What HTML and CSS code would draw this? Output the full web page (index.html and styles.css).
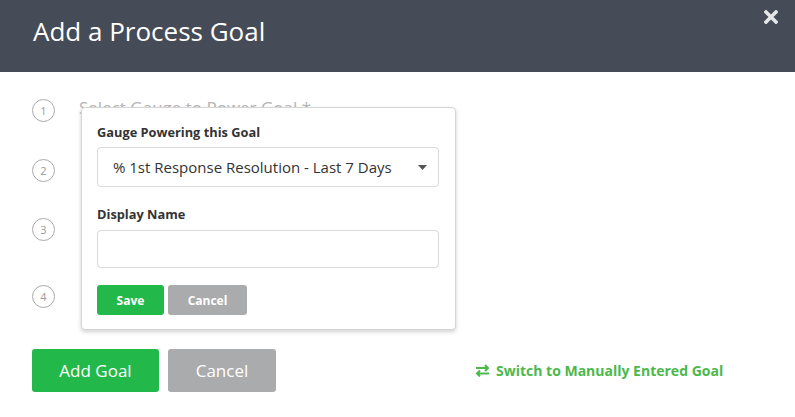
FILE: index.html
```html
<!DOCTYPE html>
<html>
<head>
<meta charset="utf-8">
<link rel="stylesheet" href="styles.css">
</head>
<body>
<div class="modal">
  <header class="modal-header">
    <h1 class="title">Add a Process Goal</h1>
    <button class="close" aria-label="Close">
      <svg width="14" height="14" viewBox="0 0 14 14"><path d="M2 2 L12 12 M12 2 L2 12" stroke="#e6e7e9" stroke-width="3.6" stroke-linecap="square"/></svg>
    </button>
  </header>
  <main class="modal-body">
    <ol class="steps">
      <li class="step s1"><span class="num">1</span><span class="label">Select Gauge to Power Goal *</span></li>
      <li class="step s2"><span class="num">2</span></li>
      <li class="step s3"><span class="num">3</span></li>
      <li class="step s4"><span class="num">4</span></li>
    </ol>
    <div class="popover">
      <label class="field-label">Gauge Powering this Goal</label>
      <div class="select">
        <span>% 1st Response Resolution - Last 7 Days</span>
        <svg width="9" height="5" viewBox="0 0 9 5"><path d="M0 0 H9 L4.5 5 Z" fill="#555"/></svg>
      </div>
      <label class="field-label dn">Display Name</label>
      <div class="input"></div>
      <div class="pop-actions">
        <button class="btn btn-green small">Save</button>
        <button class="btn btn-gray small">Cancel</button>
      </div>
    </div>
    <div class="actions">
      <button class="btn btn-green big">Add Goal</button>
      <button class="btn btn-gray big">Cancel</button>
      <a class="switch" href="#">
        <svg width="15" height="13" viewBox="0 0 15 13"><path d="M1 4 H13 M10 1 L13 4 L10 7" fill="none" stroke="#4cb84c" stroke-width="2"/><path d="M14 9.5 H2 M5 6.5 L2 9.5 L5 12.5" fill="none" stroke="#4cb84c" stroke-width="2"/></svg>
        Switch to Manually Entered Goal
      </a>
    </div>
  </main>
</div>
</body>
</html>
```
FILE: styles.css
```css
* { box-sizing: border-box; }
body {
  margin: 0;
  background: #fff;
  font-family: "Open Sans", "Liberation Sans", sans-serif;
  color: #333;
}
.modal { width: 795px; height: 417px; overflow: hidden; }
.modal-header {
  height: 72px;
  background: #454c57;
  display: flex;
  align-items: flex-start;
  justify-content: space-between;
  padding: 0 17px 0 33px;
}
.title {
  margin: 14px 0 0;
  font-size: 26px;
  line-height: 35px;
  font-weight: 400;
  color: #fff;
}
.close {
  margin-top: 10px;
  background: none;
  border: 0;
  padding: 0;
  width: 14px;
  height: 14px;
  display: flex;
}
.modal-body { position: relative; padding: 0 0 0 32px; }
.steps {
  list-style: none;
  margin: 0;
  padding: 27px 0 0;
  display: flex;
  flex-direction: column;
}
.step { display: flex; align-items: center; height: 22px; }
.s2 { margin-top: 38px; }
.s3 { margin-top: 37px; }
.s4 { margin-top: 45px; }
.num {
  width: 23px;
  height: 23px;
  border: 1px solid #a9a9a9;
  border-radius: 50%;
  display: flex;
  align-items: center;
  justify-content: center;
  font-size: 11px;
  color: #999;
  flex: none;
}
.label {
  margin-left: 24px;
  font-size: 17px;
  color: #b5b5b5;
  position: relative;
  top: -3px;
}
.popover {
  position: absolute;
  left: 81px;
  top: 35px;
  width: 375px;
  height: 223px;
  background: #fff;
  border: 1px solid #d5d5d5;
  border-radius: 4px;
  box-shadow: 0 2px 4px rgba(0,0,0,0.18);
  padding: 16px 16px 0 15px;
  display: flex;
  flex-direction: column;
}
.field-label {
  font-size: 12.8px;
  font-weight: 700;
  color: #333;
  line-height: 16px;
}
.select {
  margin-top: 7px;
  height: 40px;
  border: 1px solid #d9d9d9;
  border-radius: 4px;
  display: flex;
  align-items: center;
  justify-content: space-between;
  padding: 0 11px 0 15px;
  font-size: 15px;
  color: #333;
}
.dn { margin-top: 19px; }
.input {
  margin-top: 8px;
  height: 38px;
  border: 1px solid #d9d9d9;
  border-radius: 4px;
}
.pop-actions { margin-top: 17px; display: flex; gap: 4px; }
.btn {
  border: 0;
  border-radius: 3px;
  color: #fff;
  font-family: "Open Sans", "Liberation Sans", sans-serif;
  padding: 0;
}
.btn-green { background: #22b94a; }
.btn-gray { background: #aaabad; }
.small { height: 30px; font-size: 12px; font-weight: 700; }
.small.btn-green { width: 67px; }
.small.btn-gray { width: 79px; }
.actions {
  margin-top: 42px;
  display: flex;
  align-items: center;
}
.big { height: 43px; font-size: 17px; font-weight: 400; border-radius: 3px; }
.big.btn-green { width: 127px; }
.big.btn-gray { width: 108px; margin-left: 9px; }
.switch {
  margin-left: 199px;
  display: flex;
  align-items: center;
  gap: 6px;
  color: #4cb84c;
  font-size: 14px;
  font-weight: 700;
  text-decoration: none;
}
```
